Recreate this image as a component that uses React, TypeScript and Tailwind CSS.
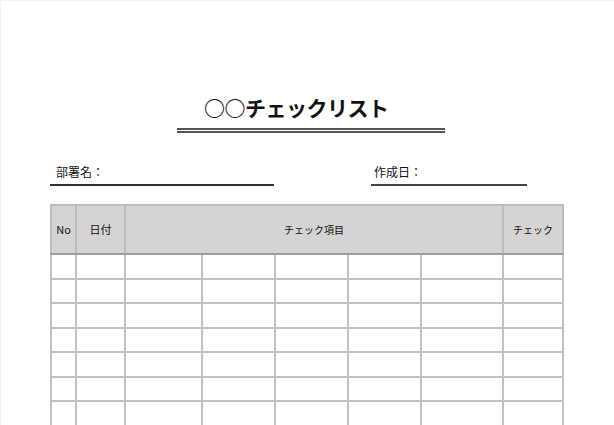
const rows = Array.from({ length: 7 });
const itemCols = 5;

export default function App() {
  return (
    <div
      className="w-[614px] h-[425px] overflow-hidden bg-white border-l border-t border-[#f2f2f2] text-[#111]"
      style={{ fontFamily: '"Noto Sans CJK JP", "Noto Sans", sans-serif' }}
    >
      {/* title */}
      <div className="pt-[91px] pl-[203px]">
        <h1 className="text-[21px] leading-[31px] font-bold tracking-[-0.5px]">○○チェックリスト</h1>
      </div>
      <div className="ml-[176px] mt-[5px] w-[268px] h-[5px] border-y-2 border-[#555]" />

      {/* fields */}
      <div className="flex mt-[31px] text-[12px] leading-[16px]">
        <div className="ml-[49px] w-[224px] border-b-2 border-[#333] pl-[6px] pb-[4px]">部署名：</div>
        <div className="ml-[97px] w-[156px] border-b-2 border-[#444] pl-[3px] pb-[4px]">作成日：</div>
      </div>

      {/* table */}
      <table className="ml-[49px] mt-[18px] w-[512px] table-fixed border-collapse">
        <colgroup>
          <col className="w-[25px]" />
          <col className="w-[49px]" />
          <col className="w-[77px]" />
          <col className="w-[73px]" />
          <col className="w-[73px]" />
          <col className="w-[73px]" />
          <col className="w-[82px]" />
          <col className="w-[60px]" />
        </colgroup>
        <thead>
          <tr className="h-[49px] bg-[#d5d3d3] text-[11px]">
            <th className="border-2 border-[#bcbcbc] border-b-[#9e9e9e] font-normal">No</th>
            <th className="border-2 border-[#bcbcbc] border-b-[#9e9e9e] font-normal">日付</th>
            <th colSpan={itemCols} className="border-2 border-[#bcbcbc] border-b-[#9e9e9e] font-normal text-[10px]">
              チェック項目
            </th>
            <th className="border-2 border-[#bcbcbc] border-b-[#9e9e9e] font-normal text-[10px]">チェック</th>
          </tr>
        </thead>
        <tbody>
          {rows.map((_, r) => (
            <tr key={r} className={r % 2 === 0 ? "h-[25px]" : "h-[24px]"}>
              {Array.from({ length: 8 }).map((_, c) => (
                <td key={c} className="border-2 border-[#c2c2c2]" />
              ))}
            </tr>
          ))}
        </tbody>
      </table>
    </div>
  );
}
